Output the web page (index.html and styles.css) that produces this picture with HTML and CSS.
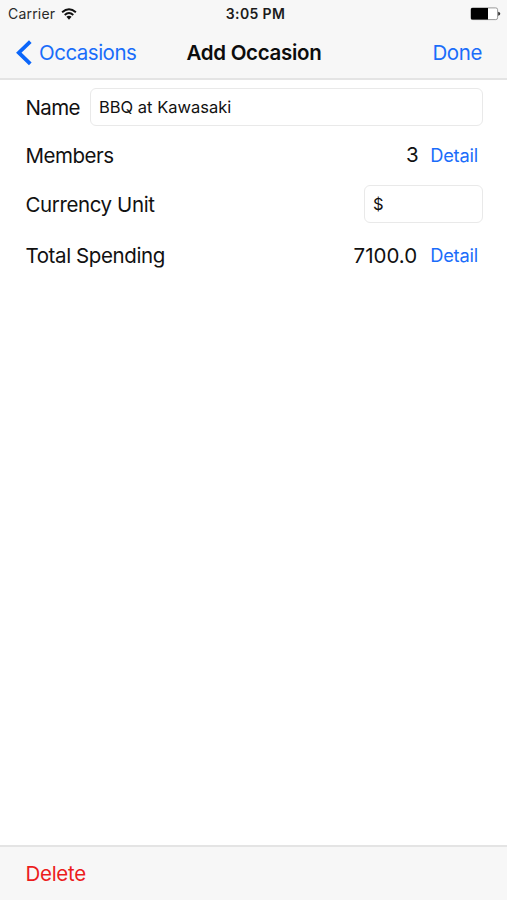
FILE: index.html
```html
<!DOCTYPE html>
<html lang="en">
<head>
<meta charset="utf-8">
<title>Add Occasion</title>
<link rel="stylesheet" href="styles.css">
</head>
<body>
<div class="screen">
  <header class="top">
    <div class="status">
      <div class="carrier">
        <span>Carrier</span>
        <svg class="wifi" width="16" height="12" viewBox="0 0 16 12" fill="none" stroke="#111" stroke-width="1.9">
          <path d="M1.1 4.2Q8-1.9 14.9 4.2"/>
          <path d="M3.7 7Q8 3.2 12.3 7"/>
          <path d="M5.4 8.8Q8 6.6 10.6 8.8L8 11.7Z" fill="#111" stroke="none"/>
        </svg>
      </div>
      <span class="time">3:05 PM</span>
      <svg class="battery" width="31" height="14" viewBox="0 0 31 14">
        <rect x=".9" y=".9" width="26.7" height="11.7" rx="1.8" fill="#fff" stroke="#999" stroke-width="1"/>
        <path d="M2 1H18V12.5H2Q1 12.5 1 11.5V2Q1 1 2 1Z" fill="#000"/>
        <path d="M28.2 4.7Q30.3 5 30.3 6.7T28.2 8.7Z" fill="#333"/>
      </svg>
    </div>
    <nav class="nav">
      <a class="back">
        <svg width="16" height="26" viewBox="0 0 16 26" fill="none" stroke="#0b66fa" stroke-width="3.8"><path d="M14.3 1.6L2.8 12.7L14.3 23.8"/></svg>
        <span class="back-label">Occasions</span>
      </a>
      <h1 class="title">Add Occasion</h1>
      <a class="done">Done</a>
    </nav>
  </header>
  <main class="form">
    <div class="row row-name"><span class="label name">Name</span><div class="field field-name"><span>BBQ at Kawasaki</span></div></div>
    <div class="row row-members"><span class="label members">Members</span><span class="value count">3</span><a class="detail">Detail</a></div>
    <div class="row row-currency"><span class="label currency">Currency Unit</span><div class="field field-unit"><span>$</span></div></div>
    <div class="row row-total"><span class="label total">Total Spending</span><span class="value amount">7100.0</span><a class="detail">Detail</a></div>
  </main>
  <footer class="toolbar"><a class="delete">Delete</a></footer>
</div>
</body>
</html>
```

FILE: styles.css
```css
* { box-sizing: border-box; }
body {
  margin: 0;
  background: #fff;
  color: #111;
  font-family: Inter, "Liberation Sans", sans-serif;
  font-size: 20.5px;
  line-height: 24px;
  letter-spacing: -0.4px;
  white-space: nowrap;
}
.screen { height: 900px; display: flex; flex-direction: column; }
.top { height: 80px; background: #f7f7f7; border-bottom: 2px solid #e4e4e4; }
.status {
  height: 27px;
  display: grid;
  grid-template-columns: 1fr auto 1fr;
  align-items: center;
  padding: 0 6px 0 8px;
  font-size: 14px;
  letter-spacing: 0.2px;
}
.carrier { display: flex; align-items: center; gap: 6px; color: #2a2a2a; }
.time { font-weight: 600; color: #1c1c1c; letter-spacing: 0.35px; padding-left: 2px; }
.battery { justify-self: end; }
.nav {
  height: 52px;
  display: grid;
  grid-template-columns: 1fr auto 1fr;
  align-items: center;
  padding: 0 25px 0 26px;
}
.back { display: flex; align-items: center; gap: 7px; margin-left: -10px; color: #1a6dfa; }
.back svg { margin-bottom: 1px; }
.back-label { letter-spacing: -0.5px; }
.title { margin: 0; font-size: 20.5px; font-weight: 600; letter-spacing: -0.3px; color: #0c0c0c; }
.done { justify-self: end; color: #1a6dfa; }
.form { flex: 1; padding: 8px 24px 0 25.5px; }
.row { display: flex; align-items: center; }
.row-name { height: 38px; }
.row-members { height: 59px; }
.row-currency { height: 38px; }
.row-total { height: 65px; }
.label { margin-right: auto; }
.name { padding-top: 1px; letter-spacing: -0.6px; }
.members { letter-spacing: -0.5px; }
.currency { padding-top: 1px; }
.count { padding-bottom: 2px; }
.amount { letter-spacing: 0; margin-right: 1px; }
.field {
  height: 38px;
  border: 1px solid #e9e9e9;
  border-radius: 6px;
  padding: 6px 8px;
  font-size: 16.5px;
  letter-spacing: 0;
}
.field-name { width: 393px; }
.field-unit { width: 119px; }
.detail {
  color: #1a6dfa;
  font-size: 18.3px;
  letter-spacing: -0.2px;
  margin: 0 5px 0 12px;
  padding-bottom: 2px;
}
.toolbar {
  height: 55px;
  background: #f7f7f7;
  border-top: 2px solid #e4e4e4;
  display: flex;
  align-items: center;
  padding: 0 25.5px;
}
.delete { color: #ec1c1c; letter-spacing: -0.3px; }
```
